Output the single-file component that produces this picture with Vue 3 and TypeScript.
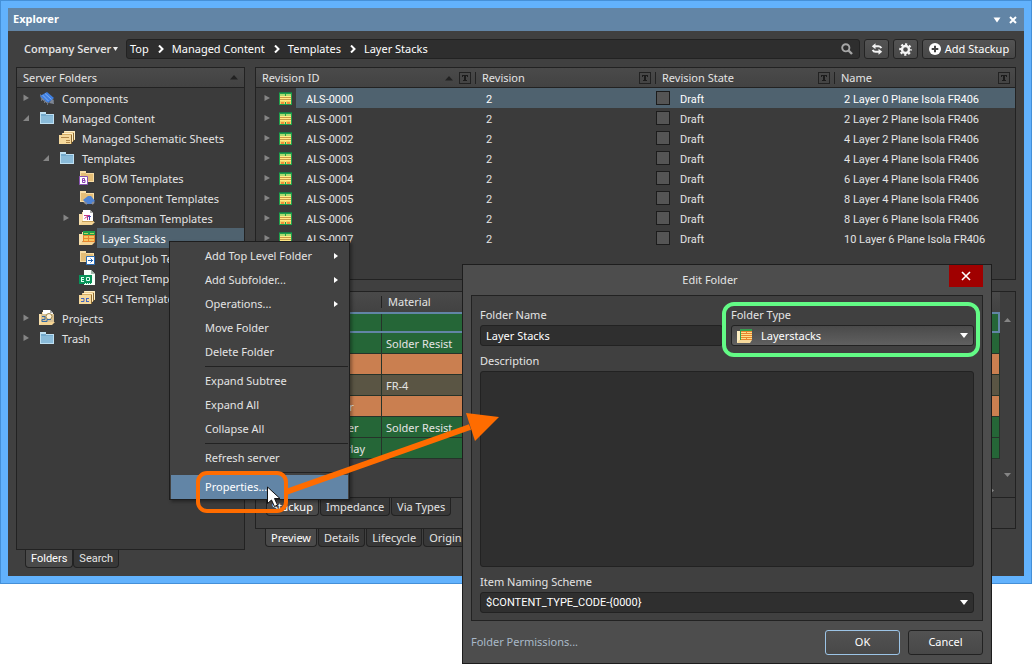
<script setup lang="ts">
import { ref } from 'vue'

interface TreeNode {
  label: string
  level: number
  icon: string
  state?: 'open' | 'closed'
  selected?: boolean
}
interface Revision {
  id: string
  revision: string
  state: string
  name: string
}
interface StackLayer {
  name: string
  material: string
  kind: string
}
interface MenuEntry {
  label: string
  submenu?: boolean
  divided?: boolean
  active?: boolean
}

const crumbs = ['Top', 'Managed Content', 'Templates', 'Layer Stacks']

const tree: TreeNode[] = [
  { label: 'Components', level: 0, icon: 'chip', state: 'closed' },
  { label: 'Managed Content', level: 0, icon: 'folder', state: 'open' },
  { label: 'Managed Schematic Sheets', level: 1, icon: 'sheets' },
  { label: 'Templates', level: 1, icon: 'folder', state: 'open' },
  { label: 'BOM Templates', level: 2, icon: 'bom' },
  { label: 'Component Templates', level: 2, icon: 'component' },
  { label: 'Draftsman Templates', level: 2, icon: 'draftsman', state: 'closed' },
  { label: 'Layer Stacks', level: 2, icon: 'stack', selected: true },
  { label: 'Output Job Templates', level: 2, icon: 'output' },
  { label: 'Project Templates', level: 2, icon: 'project' },
  { label: 'SCH Templates', level: 2, icon: 'sch' },
  { label: 'Projects', level: 0, icon: 'projects', state: 'closed' },
  { label: 'Trash', level: 0, icon: 'folder', state: 'closed' },
]

const columns = ['Revision ID', 'Revision', 'Revision State', 'Name']

const names = [
  '2 Layer 0 Plane Isola FR406',
  '2 Layer 2 Plane Isola FR406',
  '4 Layer 2 Plane Isola FR406',
  '4 Layer 4 Plane Isola FR406',
  '6 Layer 4 Plane Isola FR406',
  '8 Layer 4 Plane Isola FR406',
  '8 Layer 6 Plane Isola FR406',
  '10 Layer 6 Plane Isola FR406',
]
const revisions: Revision[] = names.map((name, i) => ({
  id: `ALS-000${i}`,
  revision: '2',
  state: 'Draft',
  name,
}))

const layers: StackLayer[] = [
  { name: 'Top Overlay', material: '', kind: 'mask' },
  { name: 'Top Solder', material: 'Solder Resist', kind: 'mask' },
  { name: 'Top Layer', material: '', kind: 'copper' },
  { name: 'Dielectric 1', material: 'FR-4', kind: 'core' },
  { name: 'Bottom Layer', material: '', kind: 'copper' },
  { name: 'Bottom Solder', material: 'Solder Resist', kind: 'mask' },
  { name: 'Bottom Overlay', material: '', kind: 'mask' },
]

const menu: MenuEntry[] = [
  { label: 'Add Top Level Folder', submenu: true },
  { label: 'Add Subfolder...', submenu: true },
  { label: 'Operations...', submenu: true },
  { label: 'Move Folder' },
  { label: 'Delete Folder' },
  { label: 'Expand Subtree', divided: true },
  { label: 'Expand All' },
  { label: 'Collapse All' },
  { label: 'Refresh server', divided: true },
  { label: 'Properties...', divided: true, active: true },
]

const folderTabs = ['Folders', 'Search']
const stackTabs = ['Stackup', 'Impedance', 'Via Types']
const previewTabs = ['Preview', 'Details', 'Lifecycle', 'Origin']

const folderName = ref('Layer Stacks')
const folderType = ref('Layerstacks')
const description = ref('')
const naming = ref('$CONTENT_TYPE_CODE-{0000}')
</script>

<template>
  <div class="screen">
    <main class="window">
      <header class="titlebar">
        <h1>Explorer</h1>
        <button class="bare" aria-label="Window menu">
          <svg width="8" height="6" viewBox="0 0 8 6"><path d="M0.500 0.500h7L4 5.500z" fill="#fff" /></svg>
        </button>
        <button class="bare" aria-label="Close panel">
          <svg width="8" height="8" viewBox="0 0 8 8"><path d="M1 1l6 6M7 1L1 7" stroke="#fff" stroke-width="2" /></svg>
        </button>
      </header>

      <div class="toolbar">
        <button class="server">
          Company Server
          <svg width="5" height="4" viewBox="0 0 5 4"><path d="M0 0h5L2.500 4z" fill="#eee" /></svg>
        </button>
        <nav class="crumbs" aria-label="Path">
          <template v-for="(crumb, i) in crumbs" :key="crumb">
            <svg v-if="i" class="chevron" width="6" height="8" viewBox="0 0 6 8">
              <path d="M1 0.500L4.500 4L1 7.500" fill="none" stroke="#fff" stroke-width="2" />
            </svg>
            <a href="#">{{ crumb }}</a>
          </template>
          <button class="bare find" aria-label="Search">
            <svg width="12" height="12" viewBox="0 0 12 12" fill="none" stroke="#a6a6a6">
              <circle cx="4.800" cy="4.800" r="3.600" stroke-width="1.900" />
              <path d="M7.500 7.500L11 11" stroke-width="2.400" />
            </svg>
          </button>
        </nav>
        <button class="tool" aria-label="Refresh">
          <svg width="12" height="12" viewBox="0 0 12 12">
            <path d="M3.500 3.300H7.500C9 3.300 9.800 4 10.300 5.200M8.500 8.700H4.500C3 8.700 2.200 8 1.700 6.800" fill="none" stroke="#f2f2f2" stroke-width="2" />
            <path d="M4.500 0.300v6L0.800 3.300zM7.500 5.700v6l3.700-3z" fill="#f2f2f2" />
          </svg>
        </button>
        <button class="tool" aria-label="Settings">
          <svg width="13" height="13" viewBox="0 0 13 13" fill="none" stroke="#f5f5f5">
            <circle cx="6.500" cy="6.500" r="3.500" stroke-width="2.400" />
            <circle cx="6.500" cy="6.500" r="5.300" stroke-width="2" stroke-dasharray="2.200 1.963" stroke-dashoffset="1.100" />
          </svg>
        </button>
        <button class="tool add">
          <svg width="12" height="12" viewBox="0 0 12 12">
            <circle cx="6" cy="6" r="6" fill="#fff" />
            <path d="M6 2.700v6.600M2.700 6h6.600" stroke="#444" stroke-width="2" />
          </svg>
          Add Stackup
        </button>
      </div>

      <div class="body">
        <section class="left">
          <div class="panel folders">
            <div class="head">
              <span>Server Folders</span>
              <svg width="8" height="5" viewBox="0 0 8 5"><path d="M0 4.500h8L4 0z" fill="#222" /></svg>
            </div>
            <ul class="tree">
              <li
                v-for="node in tree"
                :key="node.label"
                :class="['node', `level-${node.level}`, { selected: node.selected }]"
              >
                <span class="twisty">
                  <svg v-if="node.state === 'closed'" width="6" height="8" viewBox="0 0 6 8"><path d="M0.500 0.500v6.500L6 4z" fill="#858585" /></svg>
                  <svg v-if="node.state === 'open'" width="6" height="8" viewBox="0 0 6 8"><path d="M6 1v6H0z" fill="#858585" /></svg>
                </span>
                <svg class="icon" width="16" height="16" viewBox="0 0 16 16">
                  <template v-if="node.icon === 'folder'">
                    <path d="M1 2h6v2h8v10H1z" fill="#bfe0f2" />
                    <path d="M2 4h5v1h7v8H2z" fill="#74aacd" />
                    <path d="M2 6h12v7H2z" fill="#8abbd9" />
                  </template>
                  <template v-else-if="node.icon === 'chip'">
                    <path d="M1 4l1 5 7 5 1-3zM10 13l5 1v-4l-2-1z" fill="#7f8794" />
                    <path d="M1 6l7-4 7 6-6 5z" fill="#3f7fe0" />
                    <path d="M3.500 5l6 6M6 3.500l6.500 6" stroke="#82b0f4" />
                    <path d="M2.500 8v3M5.500 10v3M8.500 12v3M14.500 10v3" stroke="#6d737e" />
                  </template>
                  <template v-else-if="node.icon === 'sheets' || node.icon === 'sch'">
                    <path d="M5 1h11v9H5z" fill="#e8c98c" />
                    <path d="M5.500 1.500h10v8" fill="none" stroke="#fff0c8" />
                    <path d="M3 3h11v9H3z" fill="#d6ac62" />
                    <path d="M3.500 3.500h10v8" fill="none" stroke="#fff0c8" />
                    <path d="M0 5h12v9H0z" fill="#f6d99c" />
                    <path d="M12.500 5v9M14.500 3v8" stroke="#8e6b31" />
                    <path v-if="node.icon === 'sheets'" d="M2 7.500h8M7 10.500h4M7 12.500h4" stroke="#b2884a" />
                    <path v-else d="M2 8.500h3v3H2M7 8.500h3M7 11.500h3M7.500 8v3" fill="none" stroke="#4265c0" />
                  </template>
                  <template v-else-if="node.icon === 'draftsman' || node.icon === 'projects' || node.icon === 'stack'">
                    <path d="M0 4h3V2h3v9l-3 4H0z" fill="#f8dfab" />
                    <path v-if="node.icon !== 'stack'" d="M4 0h7l3 3v9H4z" fill="#fff" />
                    <path v-if="node.icon !== 'stack'" d="M11 0v3h3z" fill="#aaa" />
                    <path d="M3 12h13l-3 3H0z" fill="#f3d393" />
                    <path d="M3 11.500h12" stroke="#c79f58" />
                    <path v-if="node.icon === 'draftsman'" d="M5 5.500h6M8.500 5v5M5.500 8.500l4-3" stroke="#c33a86" />
                    <path v-if="node.icon === 'draftsman'" d="M9 6.500h3M10.500 6v4" stroke="#444bb5" />
                    <template v-if="node.icon === 'projects'">
                      <path d="M2 4h13v8H2z" fill="#d9c193" />
                      <circle cx="10" cy="6.500" r="3" fill="#fff3d9" stroke="#9d874e" />
                      <path d="M3 6.500h3v3H3v2h5v-2h4" fill="none" stroke="#356ba5" />
                    </template>
                    <template v-if="node.icon === 'stack'">
                      <path d="M4 1h12v11H4z" fill="#20a04b" />
                      <path d="M5 3h4v1H5zM11 3h4v1h-4z" fill="#b7d75a" />
                      <path d="M4 5h12v7H4z" fill="#e8852f" />
                      <path d="M5 6h4v2H5zM10 6h5v2h-5zM5 9h4v2H5zM10 9h5v2h-5z" fill="#f4c860" />
                    </template>
                  </template>
                  <template v-else-if="node.icon === 'project'">
                    <path d="M5 0h7l4 4v11H5z" fill="#f7fff9" />
                    <path d="M12 0v4h4z" fill="#a4b9ac" />
                    <path d="M0 5h13v9H0z" fill="#07945a" />
                    <path d="M2 7.500h3M2 9.500h3M2 11.500h3M2.500 7v5M7.500 7.500h3v3h-3z" fill="none" stroke="#dffff0" />
                    <path d="M6 13.500h7" stroke="#dffff0" stroke-dasharray="1 1" />
                  </template>
                  <template v-else>
                    <path d="M1 1h6v2h8v9H1z" fill="#f7dca5" />
                    <path d="M2 3h5v1h7v7H2z" fill="#e4bd77" />
                    <template v-if="node.icon === 'bom'">
                      <path d="M0.500 6.500h8v8h-8z" fill="#fff" stroke="#8a52b3" />
                      <path d="M3.500 8.500h2v1.500l0.500 0.500v2H3.500zM3.500 10.500h2.500" fill="none" stroke="#8a3fb0" />
                    </template>
                    <template v-else-if="node.icon === 'component'">
                      <path d="M4 10l5-4h3l4 5-3 3H8z" fill="#4e83d4" />
                      <path d="M5 12l3 2M13 14l2-2" stroke="#8c8f98" stroke-width="2" />
                    </template>
                    <template v-else>
                      <path d="M7.500 6.500h8v8h-8z" fill="#fff" stroke="#2b6cb4" />
                      <path d="M9 10.500h5M11.500 8.500l2 2-2 2" fill="none" stroke="#2062b0" />
                    </template>
                  </template>
                </svg>
                <span class="label">{{ node.label }}</span>
              </li>
            </ul>
          </div>
          <div class="tabs folder-tabs">
            <button v-for="(tab, i) in folderTabs" :key="tab" :class="['tab', { current: i === 0 }]">{{ tab }}</button>
          </div>
        </section>

        <section class="right">
          <div class="panel revisions">
            <table class="grid">
              <colgroup><col class="c-id" /><col class="c-rev" /><col class="c-state" /><col /></colgroup>
              <thead>
                <tr>
                  <th v-for="(column, i) in columns" :key="column">
                    <div class="th">
                      <span>{{ column }}</span>
                      <svg v-if="i === 0" width="8" height="5" viewBox="0 0 8 5"><path d="M0 4.500h8L4 0z" fill="#222" /></svg>
                      <button class="filter" :aria-label="`Filter ${column}`">
                        <svg width="6" height="6" viewBox="0 0 6 6"><path d="M0 0h6v2H5V1H4v4h1v1H1V5h1V1H1v1H0z" fill="#1c1c1c" /></svg>
                      </button>
                    </div>
                  </th>
                </tr>
              </thead>
              <tbody>
                <tr v-for="(row, i) in revisions" :key="row.id" :class="{ picked: i === 0 }">
                  <td class="id">
                    <div class="idcell">
                      <svg class="more" width="6" height="8" viewBox="0 0 6 8"><path d="M0.500 1v6L6 4z" fill="#858585" /></svg>
                      <svg class="layers" width="13" height="13" viewBox="0 0 13 13">
                        <path d="M0 0h13v13H0z" fill="#1fa04d" />
                        <path d="M0 0h13v1H0z" fill="#197745" />
                        <path d="M1 2h5v2H1zM7 2h5v2H7z" fill="#a9dc70" />
                        <path d="M1 4h11v6H1z" fill="#ffe985" />
                        <path d="M1 5h11v1H1zM1 7h11v1H1z" fill="#c89c48" />
                        <path d="M1 9h5v3H1zM7 9h5v3H7z" fill="#f2d466" />
                        <path d="M2 10h3v2H2zM8 10h3v2H8z" fill="#f0913d" />
                      </svg>
                      <span>{{ row.id }}</span>
                    </div>
                  </td>
                  <td class="rev">{{ row.revision }}</td>
                  <td><div class="state"><i></i><span>{{ row.state }}</span></div></td>
                  <td class="name">{{ row.name }}</td>
                </tr>
              </tbody>
            </table>
          </div>

          <div class="panel preview">
            <div class="stackarea">
              <table class="stack">
                <colgroup><col class="s-no" /><col class="s-name" /><col class="s-mat" /><col /></colgroup>
                <thead>
                  <tr><th></th><th>Name</th><th>Material</th><th></th></tr>
                </thead>
                <tbody>
                  <tr v-for="(layer, i) in layers" :key="layer.name" :class="[layer.kind, { active: i === 0 }]">
                    <td></td><td class="layer">{{ layer.name }}</td><td>{{ layer.material }}</td><td></td>
                  </tr>
                </tbody>
              </table>
              <div class="scroll">
                <svg width="7" height="4" viewBox="0 0 7 4"><path d="M0 4h7L3.500 0z" fill="#858585" /></svg>
                <svg width="7" height="4" viewBox="0 0 7 4"><path d="M0 0h7L3.500 4z" fill="#858585" /></svg>
              </div>
            </div>
            <div class="hscroll">
              <svg width="4" height="7" viewBox="0 0 4 7"><path d="M0 0v7l4-3.500z" fill="#858585" /></svg>
            </div>
            <div class="tabs strip">
              <button v-for="(tab, i) in stackTabs" :key="tab" :class="['tab', { current: i === 0 }]">{{ tab }}</button>
            </div>
          </div>
          <div class="tabs">
            <button v-for="(tab, i) in previewTabs" :key="tab" :class="['tab', { current: i === 0 }]">{{ tab }}</button>
          </div>
        </section>
      </div>
    </main>

    <div class="menu" role="menu">
      <template v-for="entry in menu" :key="entry.label">
        <hr v-if="entry.divided" />
        <button role="menuitem" :class="['entry', { chosen: entry.active }]">
          <span>{{ entry.label }}</span>
          <svg v-if="entry.submenu" width="4" height="6" viewBox="0 0 4 6"><path d="M0 0v6l4-3z" fill="#fff" /></svg>
        </button>
      </template>
    </div>

    <form class="dialog" role="dialog" aria-labelledby="dialog-title" @submit.prevent>
      <header class="dialog-head">
        <h2 id="dialog-title">Edit Folder</h2>
        <button type="button" class="close" aria-label="Close">
          <svg width="10" height="10" viewBox="0 0 10 10"><path d="M1 1l8 8M9 1L1 9" stroke="#fff" stroke-width="1.600" /></svg>
        </button>
      </header>
      <div class="group">
        <div class="pair">
          <div class="field">
            <label for="folder-name">Folder Name</label>
            <input id="folder-name" v-model="folderName" class="box" type="text" />
          </div>
          <div class="field">
            <label for="folder-type">Folder Type</label>
            <div class="box combo raised">
              <svg width="16" height="14" viewBox="0 0 16 14">
                <path d="M0 2h4v9l-1 3H0z" fill="#fff0c4" />
                <path d="M2 11h13l-2 3H0z" fill="#f6d99c" />
                <path d="M3 0h12v11H3z" fill="#35a04f" />
                <path d="M4 2h11v9H4z" fill="#e8852f" />
                <path d="M4 3h5v1H4zM10 3h5v1h-5zM4 5h11v1H4zM4 7h11v1H4zM4 9h5v1H4zM10 9h5v1h-5z" fill="#ffe08a" />
              </svg>
              <select id="folder-type" v-model="folderType"><option>Layerstacks</option></select>
              <svg width="8" height="5" viewBox="0 0 8 5"><path d="M0 0h8L4 5z" fill="#fff" /></svg>
            </div>
          </div>
        </div>
        <div class="field grow">
          <label for="description">Description</label>
          <textarea id="description" v-model="description" class="box"></textarea>
        </div>
        <div class="field">
          <label for="naming">Item Naming Scheme</label>
          <div class="box combo scheme">
            <select id="naming" v-model="naming"><option>$CONTENT_TYPE_CODE-{0000}</option></select>
            <svg width="8" height="5" viewBox="0 0 8 5"><path d="M0 0h8L4 5z" fill="#fff" /></svg>
          </div>
        </div>
      </div>
      <footer>
        <a href="#">Folder Permissions...</a>
        <button type="submit" class="action primary">OK</button>
        <button type="button" class="action">Cancel</button>
      </footer>
    </form>

    <div class="ring ring-type"></div>
    <div class="ring ring-properties"></div>
    <svg class="pointer" width="240" height="110" viewBox="0 0 240 110">
      <path d="M26 92L210 27" stroke="#ff6c00" stroke-width="6" />
      <path d="M206 13L239 17L215 41z" fill="#ff6c00" />
      <path d="M7.500 87v16.500l4-3.500 3 6.500 3-1.500-3-6.500h5.500z" fill="#fff" stroke="#111" />
    </svg>
  </div>
</template>

<style>
body {
  background: #fff;
}
</style>

<style scoped>
* {
  box-sizing: border-box;
}
.screen {
  position: relative;
  min-height: 100vh;
  padding-bottom: 80px;
  display: flex;
  overflow: hidden;
  font: 11px/16px 'Noto Sans', 'Open Sans', sans-serif;
  color: #e4e4e4;
}
button,
input,
select,
textarea {
  font: inherit;
  color: inherit;
}
button {
  margin: 0;
  padding: 0;
  white-space: nowrap;
}
svg {
  display: block;
  flex: none;
}
a {
  color: inherit;
  text-decoration: none;
}
h1,
h2 {
  margin: 0;
  font-size: 11px;
  font-weight: 400;
}
.window {
  flex: 1;
  min-width: 0;
  display: flex;
  flex-direction: column;
  padding: 7px;
  border: 1px solid #4590d8;
  background: #62b2fd;
}
.titlebar {
  display: flex;
  align-items: center;
  gap: 8px;
  height: 23px;
  padding: 0 7px 0 5px;
  background: #6285a6;
  color: #fff;
}
.titlebar h1 {
  flex: 1;
  line-height: 21px;
  height: 23px;
  font-weight: 700;
}
.bare {
  border: 0;
  background: none;
}
.toolbar {
  display: flex;
  align-items: center;
  gap: 4px;
  height: 36px;
  padding: 0 8px;
  background: #404040;
}
.server {
  display: flex;
  align-items: center;
  justify-content: space-between;
  width: 106px;
  padding: 0 4px 0 8px;
  border: 0;
  background: none;
  font-family: 'Open Sans', 'Noto Sans', sans-serif;
  font-weight: 600;
}
.crumbs {
  flex: 1;
  display: flex;
  align-items: center;
  height: 20px;
  padding: 0 6px 0 3px;
  border: 1px solid #222;
  border-radius: 3px;
  background: #2e2e2e;
  color: #fff;
}
.chevron {
  margin: 0 8px 0 9px;
}
.find {
  margin-left: auto;
}
.tool {
  display: flex;
  align-items: center;
  justify-content: center;
  gap: 4px;
  width: 25px;
  height: 20px;
  border: 1px solid #242424;
  border-radius: 3px;
  background: linear-gradient(#535353, #484848);
  color: #fff;
}
.add {
  width: 94px;
}
.body {
  flex: 1;
  display: flex;
  gap: 10px;
  padding: 0 8px;
  background: #404040;
}
.left {
  width: 229px;
  display: flex;
  flex-direction: column;
  padding-bottom: 8px;
}
.right {
  flex: 1;
  min-width: 0;
  display: flex;
  flex-direction: column;
  padding-bottom: 29px;
}
.panel {
  border: 1px solid #222;
  background: #3b3b3b;
}
.folders {
  flex: 1;
}
.head {
  display: flex;
  align-items: center;
  justify-content: space-between;
  height: 20px;
  padding: 0 6px;
  border-bottom: 1px solid #222;
  background: linear-gradient(#4a4a4a, #424242);
}
.tree {
  margin: 0;
  padding: 0;
  list-style: none;
}
.node {
  display: flex;
  align-items: center;
  height: 20px;
  padding-left: 6px;
}
.level-1 {
  padding-left: 26px;
}
.level-2 {
  padding-left: 46px;
}
.twisty {
  width: 16px;
}
.label {
  flex: 1;
  height: 20px;
  margin-left: 2px;
  padding-left: 5px;
  line-height: 22px;
  white-space: nowrap;
  overflow: hidden;
}
.selected .label {
  background: #4f626f;
  color: #fff;
}
.tabs {
  display: flex;
  gap: 1px;
  padding-left: 10px;
}
.tab {
  height: 18px;
  padding: 0 5px;
  border: 1px solid #222;
  border-top: 0;
  border-radius: 0 0 4px 4px;
  background: #383838;
  line-height: 18px;
}
.folder-tabs {
  gap: 0;
  padding-left: 9px;
  font-family: Roboto, 'Noto Sans', sans-serif;
}
.folder-tabs .tab {
  padding: 0 5px;
}
.current {
  background: #4a4a4a;
  color: #fff;
}
.revisions {
  height: 213px;
  margin-bottom: 11px;
}
table {
  width: 100%;
  border-collapse: separate;
  border-spacing: 0;
  table-layout: fixed;
}
th {
  text-align: left;
  font-weight: 400;
}
th,
td {
  padding: 0;
  white-space: nowrap;
}
.c-id {
  width: 220px;
}
.c-rev {
  width: 180px;
}
.c-state {
  width: 179px;
}
.grid thead tr {
  height: 20px;
  background: linear-gradient(#4a4a4a, #424242);
  box-shadow: inset 0 -1px #222;
}
.th {
  display: flex;
  align-items: center;
  gap: 6px;
  height: 12px;
  padding: 0 4px 0 6px;
  border-right: 1px solid #222;
}
th:last-child .th {
  border-right-color: transparent;
}
.th span {
  flex: 1;
}
.filter {
  display: grid;
  place-items: center;
  width: 12px;
  height: 12px;
  border: 1px solid #222;
  background: none;
}
.grid tbody {
  font-family: Roboto, 'Noto Sans', sans-serif;
}
.grid tbody tr {
  height: 20px;
}
.picked td {
  background: #4f626f;
  color: #fff;
}
.picked .id {
  background: linear-gradient(90deg, #3b3b3b 40px, #4f626f 40px);
}
.idcell {
  display: flex;
  align-items: center;
  padding-left: 8px;
}
.layers {
  margin: 0 14px 0 9px;
}
.rev {
  padding-left: 10px;
}
.name {
  padding-left: 9px;
}
.state {
  display: flex;
  align-items: center;
  gap: 10px;
}
.state i {
  width: 14px;
  height: 14px;
  border: 1px solid #1c1c1c;
  background: #555;
}
.rev,
.name,
.idcell span,
.state span {
  padding-top: 3px;
}
.preview {
  flex: 1;
  display: flex;
  flex-direction: column;
  background: #404040;
}
.stackarea {
  flex: 1;
  display: flex;
  align-items: stretch;
  background: #3e3e3e;
}
.stack {
  flex: 1;
  height: max-content;
}
.s-no {
  width: 20px;
}
.s-name {
  width: 106px;
}
.s-mat {
  width: 160px;
}
.stack thead tr {
  height: 20px;
  background: linear-gradient(#4a4a4a, #424242);
}
.stack th {
  padding-left: 6px;
}
.stack td {
  height: 21px;
  padding: 2px 0 0 4px;
  border-right: 1px solid #26332a;
  border-bottom: 1px solid #26332a;
}
.stack .layer {
  padding-left: 8px;
}
.stack th:nth-child(2) {
  background: linear-gradient(#222, #222) right center / 1px 12px no-repeat;
}
.mask {
  background: #256637;
}
.copper {
  background: #ca7f50;
}
.core {
  background: #5a5544;
}
.active {
  outline: 2px solid #6285a6;
  outline-offset: -2px;
}
.scroll {
  display: flex;
  flex-direction: column;
  justify-content: space-between;
  width: 15px;
  padding: 26px 4px 7px;
}
.hscroll {
  display: flex;
  justify-content: flex-end;
  height: 14px;
  padding: 3px 21px 0 0;
  border-bottom: 1px solid #222;
  background: #3e3e3e;
}
.strip {
  height: 30px;
}
.menu {
  position: absolute;
  top: 241px;
  left: 169px;
  width: 181px;
  display: flex;
  flex-direction: column;
  padding: 2px 1px 0;
  border: 1px solid #1d1d1d;
  background: #424242;
  box-shadow: 2px 2px 3px rgba(0, 0, 0, 0.35);
}
.menu hr {
  width: auto;
  height: 1px;
  margin: 2px 0 2px 34px;
  border: 0;
  background: #222;
}
.entry {
  display: flex;
  align-items: center;
  justify-content: space-between;
  height: 24px;
  padding: 0 10px 0 34px;
  border: 0;
  background: none;
}
.chosen {
  background: #6285a6;
  color: #fff;
}
.dialog {
  position: absolute;
  top: 264px;
  bottom: 0;
  left: 462px;
  width: 530px;
  display: flex;
  flex-direction: column;
  border: 1px solid #1d1d1d;
  background: #4d4d4d;
  padding: 0 8px;
}
.dialog-head {
  display: flex;
  height: 30px;
}
.dialog-head h2 {
  flex: 1;
  text-align: center;
  line-height: 30px;
}
.close {
  display: grid;
  place-items: center;
  width: 34px;
  height: 22px;
  border: 0;
  background: #a00000;
}
.group {
  flex: 1;
  display: flex;
  flex-direction: column;
  gap: 7px;
  padding: 11px 8px 7px;
  border: 1px solid #222;
  background: #404040;
}
.pair {
  display: grid;
  grid-template-columns: 1fr 1fr;
  gap: 8px;
}
.field {
  display: flex;
  flex-direction: column;
  gap: 2px;
  min-width: 0;
}
.grow {
  flex: 1;
}
.box {
  width: 100%;
  height: 21px;
  padding: 0 5px;
  border: 1px solid #222;
  border-radius: 3px;
  outline: 0;
  background: #2f2f2f;
  color: #fff;
}
textarea.box {
  flex: 1;
  resize: none;
}
.combo {
  display: flex;
  align-items: center;
}
.combo select {
  flex: 1;
  min-width: 0;
  padding: 0;
  border: 0;
  outline: 0;
  background: none;
  appearance: none;
}
.scheme {
  font-family: Roboto, 'Noto Sans', sans-serif;
}
.raised {
  background: linear-gradient(#4a4a4a, #606060);
}
.raised select {
  padding-left: 8px;
}
footer {
  display: flex;
  align-items: center;
  gap: 8px;
  height: 42px;
}
footer a {
  flex: 1;
  color: #a9b9c8;
}
.action {
  width: 75px;
  height: 25px;
  border: 1px solid #222;
  border-radius: 3px;
  background: linear-gradient(#525252, #484848);
  color: #fff;
}
.primary {
  border-color: #9cc4e6;
}
.ring {
  position: absolute;
  pointer-events: none;
}
.ring-type {
  top: 302px;
  left: 722px;
  width: 258px;
  height: 55px;
  border: 4px solid #63fb86;
  border-radius: 12px;
}
.ring-properties {
  top: 471px;
  left: 196px;
  width: 92px;
  height: 42px;
  border: 4px solid #ff6c00;
  border-radius: 11px;
}
.pointer {
  position: absolute;
  top: 400px;
  left: 260px;
  pointer-events: none;
}
</style>
